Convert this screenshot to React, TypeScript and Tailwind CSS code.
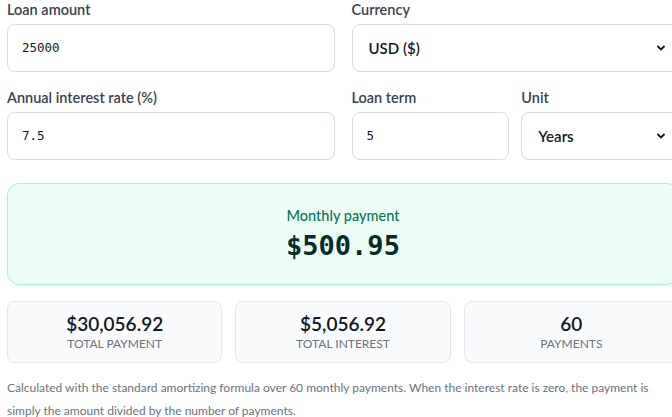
const sans = { fontFamily: 'Lato, "Noto Sans", sans-serif' };

function Chevron() {
  return (
    <svg width="10" height="10" viewBox="0 0 10 10" className="shrink-0">
      <path d="M2 3.5 L5 6.5 L8 3.5" fill="none" stroke="#111827" strokeWidth="1.8" strokeLinecap="round" strokeLinejoin="round" />
    </svg>
  );
}

function Field({ label, children }: { label: string; children: React.ReactNode }) {
  return (
    <div className="flex flex-col">
      <span className="mb-1 text-[14.5px] font-semibold leading-5 text-[#374151]">{label}</span>
      {children}
    </div>
  );
}

function TextBox({ value }: { value: string }) {
  return (
    <div className="flex h-12 items-center rounded-lg border border-[#d9dce1] bg-white px-[14px] font-['DejaVu_Sans_Mono',monospace] text-[12.5px] text-[#111827]">
      {value}
    </div>
  );
}

function SelectBox({ value }: { value: string }) {
  return (
    <div className="flex h-12 items-center justify-between rounded-lg border border-[#d9dce1] bg-white pl-4 pr-3 text-[15px] font-semibold text-[#111827]">
      <span>{value}</span>
      <Chevron />
    </div>
  );
}

function Stat({ value, label }: { value: string; label: string }) {
  return (
    <div className="flex h-[62px] flex-col items-center justify-center rounded-lg border border-[#e5e7eb] bg-[#f9fafb]">
      <span className="text-[19px] font-semibold leading-6 text-[#111827]">{value}</span>
      <span className="text-[12px] uppercase leading-4 text-[#6b7280]">{label}</span>
    </div>
  );
}

export default function App() {
  return (
    <div className="h-[417px] w-[672px] overflow-hidden bg-white" style={sans}>
      <div className="w-[679px] pl-[7px]">
        <div className="grid grid-cols-2 gap-x-[17px] gap-y-4">
          <Field label="Loan amount">
            <TextBox value="25000" />
          </Field>
          <Field label="Currency">
            <SelectBox value="USD ($)" />
          </Field>
          <Field label="Annual interest rate (%)">
            <TextBox value="7.5" />
          </Field>
          <div className="grid grid-cols-2 gap-3">
            <Field label="Loan term">
              <TextBox value="5" />
            </Field>
            <Field label="Unit">
              <SelectBox value="Years" />
            </Field>
          </div>
        </div>

        <div className="mt-[23px] flex h-[102px] flex-col items-center justify-center rounded-xl border border-[#a7f3d0] bg-[#ecfdf5]">
          <span className="text-[14.5px] font-medium leading-5 text-[#047857]">Monthly payment</span>
          <span className="mt-1 font-['DejaVu_Sans_Mono',monospace] text-[27px] font-bold leading-8 text-[#052e2b]">$500.95</span>
        </div>

        <div className="mt-4 grid grid-cols-3 gap-[13px]">
          <Stat value="$30,056.92" label="Total payment" />
          <Stat value="$5,056.92" label="Total interest" />
          <Stat value="60" label="Payments" />
        </div>

        <p className="mt-[13px] text-[12px] leading-[23px] text-[#6b7280]">
          Calculated with the standard amortizing formula over 60 monthly payments. When the interest rate is zero, the payment is simply the amount divided by the number of payments.
        </p>
      </div>
    </div>
  );
}
